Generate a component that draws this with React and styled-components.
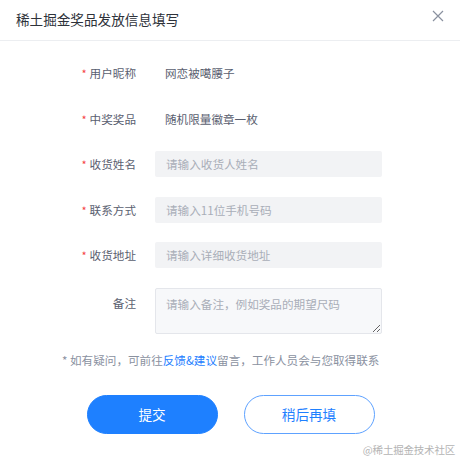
import React from 'react';
import styled, { createGlobalStyle } from 'styled-components';

const GlobalStyle = createGlobalStyle`
  html, body {
    margin: 0;
    padding: 0;
    background: #fff;
  }
  body {
    font-family: "Noto Sans CJK SC", "Noto Sans", sans-serif;
  }
`;

const Dialog = styled.div`
  position: relative;
  width: 460px;
  height: 460px;
  background: #fff;
  overflow: hidden;
`;

const Header = styled.div`
  display: flex;
  align-items: center;
  justify-content: space-between;
  height: 37px;
  padding: 0 16px 3px 16px;
  border-bottom: 1px solid #eceef1;
`;

const Title = styled.h3`
  margin: 0;
  font-size: 13.6px;
  font-weight: 400;
  color: #2e323a;
`;

const CloseButton = styled.button`
  display: flex;
  align-items: center;
  justify-content: center;
  width: 16px;
  height: 16px;
  margin-right: -2px;
  margin-top: -6px;
  padding: 0;
  border: none;
  background: none;
  cursor: pointer;
`;

const Form = styled.div`
  display: grid;
  grid-template-columns: 136px 227px;
  column-gap: 19px;
  row-gap: 19.5px;
  padding-top: 19px;
`;

const Label = styled.div`
  display: flex;
  align-items: ${p => (p.$top ? 'flex-start' : 'center')};
  justify-content: flex-end;
  height: ${p => (p.$top ? 'auto' : '26px')};
  padding-top: ${p => (p.$top ? '7px' : '0')};
  font-size: 11.6px;
  line-height: 16px;
  color: #5a6070;
`;

const Star = styled.span`
  color: #f53f3f;
  margin-right: 3px;
  font-size: 11px;
`;

const Value = styled.div`
  display: flex;
  align-items: center;
  height: 26px;
  padding-left: 10px;
  font-size: 11.6px;
  color: #5a6070;
`;

const Input = styled.input`
  box-sizing: border-box;
  width: 100%;
  height: 26px;
  padding: 0 11px;
  border: none;
  border-radius: 2px;
  background: #f2f3f5;
  font-family: inherit;
  font-size: 11.6px;
  color: #252933;
  outline: none;

  &::placeholder {
    color: #a9aeb8;
  }
`;

const TextArea = styled.textarea`
  box-sizing: border-box;
  width: 100%;
  height: 46px;
  padding: 7px 10px;
  border: 1px solid #e4e6eb;
  border-radius: 2px;
  background: #f7f8fa;
  font-family: inherit;
  font-size: 11.6px;
  line-height: 16px;
  color: #252933;
  outline: none;
  resize: vertical;

  &::placeholder {
    color: #a9aeb8;
  }
`;

const Notice = styled.p`
  margin: 17px 0 0 62px;
  font-size: 11.6px;
  line-height: 18px;
  color: #8a919f;
`;

const NoticeLink = styled.a`
  color: #1e80ff;
  text-decoration: none;
`;

const Actions = styled.div`
  display: flex;
  justify-content: center;
  gap: 26px;
  margin-top: 26px;
  padding-left: 1px;
`;

const Button = styled.button`
  box-sizing: border-box;
  width: 131px;
  height: 39px;
  border-radius: 20px;
  border: 1px solid ${p => (p.$primary ? '#1e80ff' : '#5ea2ff')};
  background: ${p => (p.$primary ? '#1e80ff' : '#fff')};
  color: ${p => (p.$primary ? '#fff' : '#1e80ff')};
  font-family: inherit;
  font-size: 13.6px;
  cursor: pointer;
`;

const Watermark = styled.span`
  position: absolute;
  right: 5px;
  bottom: 3px;
  font-family: "Noto Sans CJK SC", sans-serif;
  font-size: 10.5px;
  color: #b4b4b4;
  letter-spacing: -0.2px;
`;

const fields = [
  { label: '收货姓名', placeholder: '请输入收货人姓名' },
  { label: '联系方式', placeholder: '请输入11位手机号码' },
  { label: '收货地址', placeholder: '请输入详细收货地址' },
];

function CloseIcon() {
  return (
    <svg width="12" height="12" viewBox="0 0 12 12">
      <path d="M1 1L11 11M11 1L1 11" stroke="#8a919f" strokeWidth="1.2" fill="none" />
    </svg>
  );
}

export default function App() {
  return (
    <>
      <GlobalStyle />
      <Dialog>
        <Header>
          <Title>稀土掘金奖品发放信息填写</Title>
          <CloseButton aria-label="关闭">
            <CloseIcon />
          </CloseButton>
        </Header>
        <Form>
          <Label><Star>*</Star>用户昵称</Label>
          <Value>网恋被噶腰子</Value>
          <Label><Star>*</Star>中奖奖品</Label>
          <Value>随机限量徽章一枚</Value>
          {fields.map(f => (
            <React.Fragment key={f.label}>
              <Label><Star>*</Star>{f.label}</Label>
              <Input placeholder={f.placeholder} />
            </React.Fragment>
          ))}
          <Label $top>备注</Label>
          <TextArea placeholder="请输入备注，例如奖品的期望尺码" />
        </Form>
        <Notice>
          * 如有疑问，可前往<NoticeLink href="#">反馈&amp;建议</NoticeLink>留言，工作人员会与您取得联系
        </Notice>
        <Actions>
          <Button $primary>提交</Button>
          <Button>稍后再填</Button>
        </Actions>
        <Watermark>@稀土掘金技术社区</Watermark>
      </Dialog>
    </>
  );
}
